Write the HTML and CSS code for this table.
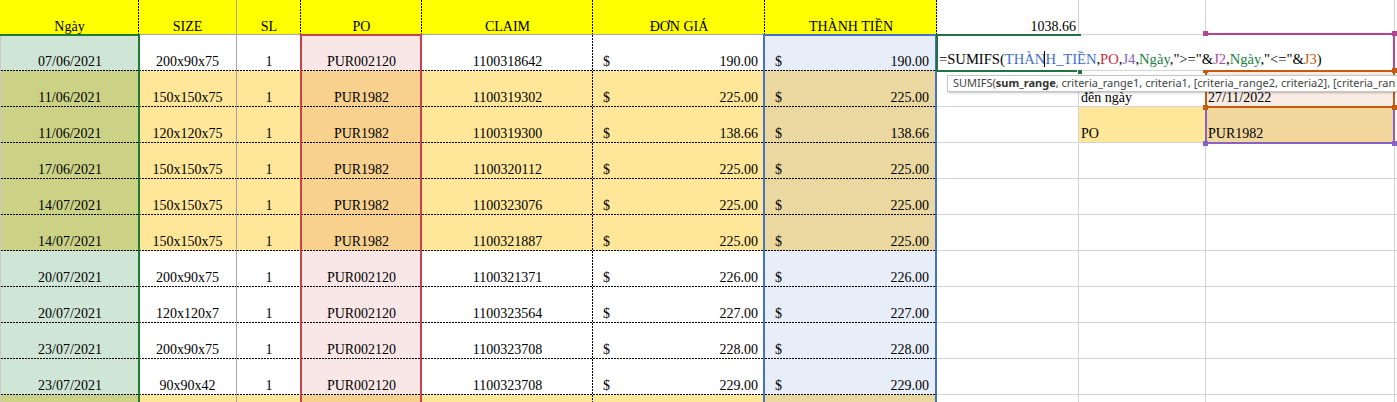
FILE: index.html
```html
<!DOCTYPE html>
<html lang="vi">
<head>
<meta charset="utf-8">
<title>Sheet</title>
<link rel="stylesheet" href="styles.css">
</head>
<body>
<div class="sheet">
  <div class="row hd">
    <div class="c a">Ngày</div>
    <div class="c b">SIZE</div>
    <div class="c cc">SL</div>
    <div class="c d">PO</div>
    <div class="c e">CLAIM</div>
    <div class="c f">ĐƠN GIÁ</div>
    <div class="c g">THÀNH TIỀN</div>
    <div class="c x num">1038.66</div>
    <div class="c x"></div>
    <div class="c x"></div>
    <div class="c x"></div>
  </div>

  <div class="row dr">
    <div class="c t a">07/06/2021</div><div class="c t b">200x90x75</div><div class="c t cc">1</div><div class="c t d">PUR002120</div><div class="c e">1100318642</div>
    <div class="c t f acc"><span>$</span><span>190.00</span></div><div class="c t g acc"><span>$</span><span>190.00</span></div>
    <div class="c x"></div><div class="c x"></div><div class="c x"></div><div class="c x"></div>
  </div>
  <div class="row dr p">
    <div class="c t a">11/06/2021</div><div class="c t b">150x150x75</div><div class="c t cc">1</div><div class="c t d">PUR1982</div><div class="c e">1100319302</div>
    <div class="c t f acc"><span>$</span><span>225.00</span></div><div class="c t g acc"><span>$</span><span>225.00</span></div>
    <div class="c x"></div><div class="c x">đên ngày</div><div class="c x j3">27/11/2022</div><div class="c x"></div>
  </div>
  <div class="row dr p">
    <div class="c t a">11/06/2021</div><div class="c t b">120x120x75</div><div class="c t cc">1</div><div class="c t d">PUR1982</div><div class="c e">1100319300</div>
    <div class="c t f acc"><span>$</span><span>138.66</span></div><div class="c t g acc"><span>$</span><span>138.66</span></div>
    <div class="c x"></div><div class="c x i4">PO</div><div class="c x j4">PUR1982</div><div class="c x"></div>
  </div>
  <div class="row dr p">
    <div class="c t a">17/06/2021</div><div class="c t b">150x150x75</div><div class="c t cc">1</div><div class="c t d">PUR1982</div><div class="c e">1100320112</div>
    <div class="c t f acc"><span>$</span><span>225.00</span></div><div class="c t g acc"><span>$</span><span>225.00</span></div>
    <div class="c x"></div><div class="c x"></div><div class="c x"></div><div class="c x"></div>
  </div>
  <div class="row dr p">
    <div class="c t a">14/07/2021</div><div class="c t b">150x150x75</div><div class="c t cc">1</div><div class="c t d">PUR1982</div><div class="c e">1100323076</div>
    <div class="c t f acc"><span>$</span><span>225.00</span></div><div class="c t g acc"><span>$</span><span>225.00</span></div>
    <div class="c x"></div><div class="c x"></div><div class="c x"></div><div class="c x"></div>
  </div>
  <div class="row dr p">
    <div class="c t a">14/07/2021</div><div class="c t b">150x150x75</div><div class="c t cc">1</div><div class="c t d">PUR1982</div><div class="c e">1100321887</div>
    <div class="c t f acc"><span>$</span><span>225.00</span></div><div class="c t g acc"><span>$</span><span>225.00</span></div>
    <div class="c x"></div><div class="c x"></div><div class="c x"></div><div class="c x"></div>
  </div>
  <div class="row dr">
    <div class="c t a">20/07/2021</div><div class="c t b">200x90x75</div><div class="c t cc">1</div><div class="c t d">PUR002120</div><div class="c e">1100321371</div>
    <div class="c t f acc"><span>$</span><span>226.00</span></div><div class="c t g acc"><span>$</span><span>226.00</span></div>
    <div class="c x"></div><div class="c x"></div><div class="c x"></div><div class="c x"></div>
  </div>
  <div class="row dr">
    <div class="c t a">20/07/2021</div><div class="c t b">120x120x7</div><div class="c t cc">1</div><div class="c t d">PUR002120</div><div class="c e">1100323564</div>
    <div class="c t f acc"><span>$</span><span>227.00</span></div><div class="c t g acc"><span>$</span><span>227.00</span></div>
    <div class="c x"></div><div class="c x"></div><div class="c x"></div><div class="c x"></div>
  </div>
  <div class="row dr">
    <div class="c t a">23/07/2021</div><div class="c t b">200x90x75</div><div class="c t cc">1</div><div class="c t d">PUR002120</div><div class="c e">1100323708</div>
    <div class="c t f acc"><span>$</span><span>228.00</span></div><div class="c t g acc"><span>$</span><span>228.00</span></div>
    <div class="c x"></div><div class="c x"></div><div class="c x"></div><div class="c x"></div>
  </div>
  <div class="row dr">
    <div class="c t a">23/07/2021</div><div class="c t b">90x90x42</div><div class="c t cc">1</div><div class="c t d">PUR002120</div><div class="c e">1100323708</div>
    <div class="c t f acc"><span>$</span><span>229.00</span></div><div class="c t g acc"><span>$</span><span>229.00</span></div>
    <div class="c x"></div><div class="c x"></div><div class="c x"></div><div class="c x"></div>
  </div>
  <div class="row dr p">
    <div class="c t a"></div><div class="c t b"></div><div class="c t cc"></div><div class="c t d"></div><div class="c e"></div>
    <div class="c t f acc"></div><div class="c t g acc"></div>
    <div class="c x"></div><div class="c x"></div><div class="c x"></div><div class="c x"></div>
  </div>

  <div class="rng rng-a"></div>
  <div class="rng rng-d"></div>
  <div class="rng rng-g"></div>

  <div class="rng rng-j2"><i class="hnd tl"></i><i class="hnd tr"></i></div>
  <div class="rng rng-j4"><i class="hnd bl"></i><i class="hnd br"></i></div>
  <div class="rng rng-j3"><i class="hnd tl"></i><i class="hnd tr"></i><i class="hnd bl"></i><i class="hnd br"></i></div>

  <div class="active"><i class="fill"></i></div>

  <div class="editor"><span class="ftx">=SUMIFS(<span class="fb">THÀN<span class="caret">H_TIỀN</span></span>,<span class="fr">PO</span>,<span class="fp">J4</span>,<span class="fg">Ngày</span>,"&gt;="&amp;<span class="fm">J2</span>,<span class="fg">Ngày</span>,"&lt;="&amp;<span class="fo">J3</span>)</span></div>

  <div class="tip">SUMIFS(<b>sum_range</b>, criteria_range1, criteria1, [criteria_range2, criteria2], [criteria_ran</div>
</div>
</body>
</html>
```

FILE: styles.css
```css
* { box-sizing: border-box; margin: 0; padding: 0; }

:root {
  --dh: repeating-linear-gradient(90deg, #000 0 2px, transparent 2px 3px);
  --dv: repeating-linear-gradient(180deg, #000 0 2px, transparent 2px 3px);
}

html, body {
  width: 1397px;
  height: 402px;
  overflow: hidden;
  background: #fff;
}

.sheet {
  position: relative;
  display: grid;
  grid-template-columns: 139px 98px 64px 121px 171px 172px 172px 142px 127px 189px 1fr;
  grid-template-rows: 35px;
  grid-auto-rows: 36px;
  font-family: "Liberation Serif", "Times New Roman", serif;
  font-size: 14px;
  color: #000;
}

.row { display: contents; }

.c {
  display: flex;
  align-items: flex-end;
  justify-content: center;
  white-space: nowrap;
  overflow: hidden;
  line-height: 16px;
  padding-bottom: 1px;
}

/* header row */
.hd .c {
  background-color: #ffff00;
  border-bottom: 1px solid #a6a6a6;
  line-height: 14px;
  padding-bottom: 0;
  background-image: var(--dv);
  background-repeat: no-repeat;
  background-size: 1px 100%;
  background-position: right top;
}
.hd .b {
  background-image: none;
  border-right: 1px solid #a6a6a6;
}
.hd .x {
  background: #fff;
  border-right: 1px solid #d4d4d4;
  border-bottom: 1px solid #d4d4d4;
}
.hd .num {
  justify-content: flex-end;
  padding-right: 2px;
}

/* data rows */
.dr .t {
  background-image: var(--dh);
  background-repeat: no-repeat;
  background-size: 100% 1px;
  background-position: left bottom;
}
.dr .e {
  background-image: var(--dh), var(--dv);
  background-repeat: no-repeat, no-repeat;
  background-size: 100% 1px, 1px 100%;
  background-position: left bottom, right top;
}
.dr .a { border-left: 1px solid #c8c8c8; background-color: #cfe5d6; }
.dr .b { border-right: 1px solid #a6a6a6; }
.dr .d { background-color: #f9e7e8; }
.dr .g { background-color: #e8eef9; }

.dr.p .a { background-color: #cbd286; }
.dr.p .b,
.dr.p .cc,
.dr.p .e,
.dr.p .f { background-color: #ffe699; }
.dr.p .d { background-color: #f8d18f; }
.dr.p .g { background-color: #ebd8a0; }

.acc {
  justify-content: space-between;
  padding-left: 10px;
  padding-right: 7px;
}
.g.acc { padding-right: 8px; }

.dr .x {
  background: #fff;
  border-right: 1px solid #d4d4d4;
  border-bottom: 1px solid #d4d4d4;
  padding-bottom: 0;
  justify-content: flex-start;
  padding-left: 2px;
}
.dr .x.j3 { background: #f9ece4; }
.dr .x.i4 { background: #ffe699; }
.dr .x.j4 { background: #f2d79c; }

/* range finder boxes (overlay) */
.rng {
  position: absolute;
  border: 2px solid;
  z-index: 1;
}
.rng-a { left: -2px; top: 34px; width: 142px; height: 420px; border-color: #1e7b32; }
.rng-d { left: 300px; top: 34px; width: 122px; height: 420px; border-color: #c8414b; }
.rng-g { left: 763px; top: 34px; width: 174px; height: 420px; border-color: #4472c4; }

.rng-j2 { left: 1205px; top: 33px; width: 190px; height: 39px; border-color: #b4458f; }
.rng-j3 { left: 1205px; top: 70px; width: 190px; height: 38px; border-color: #c55a11; }
.rng-j4 { left: 1205px; top: 106px; width: 190px; height: 38px; border-color: #8761c4; }

.hnd {
  position: absolute;
  width: 5px;
  height: 5px;
}
.rng-j2 .hnd { background: #b4458f; }
.rng-j3 .hnd { background: #c55a11; }
.rng-j4 .hnd { background: #8761c4; }
.hnd.tl { left: -4px; top: -4px; }
.hnd.tr { right: -4px; top: -4px; }
.hnd.bl { left: -4px; bottom: -4px; }
.hnd.br { right: -4px; bottom: -4px; }

.active {
  position: absolute;
  left: 936px;
  top: 34px;
  width: 145px;
  height: 38px;
  border: 2px solid #217346;
  border-right: 0;
  z-index: 1;
}
.fill {
  position: absolute;
  right: -2px;
  bottom: -5px;
  width: 6px;
  height: 6px;
  background: #217346;
  border: 1px solid #fff;
}

/* in-cell editor */
.editor {
  position: absolute;
  left: 938px;
  top: 36px;
  width: 454px;
  height: 34px;
  background: #fff;
  z-index: 2;
  display: flex;
  align-items: flex-end;
  padding: 0 0 3px 1px;
  font-size: 14.6px;
  line-height: 16px;
  white-space: nowrap;
}
.caret { border-left: 1px solid #000; margin-left: -1px; }
.fb { color: #3f6fc4; }
.fr { color: #c8303c; }
.fp { color: #8a5ec2; }
.fg { color: #1e8040; }
.fm { color: #b8489a; }
.fo { color: #c55a11; }

/* function tooltip */
.tip {
  position: absolute;
  left: 947px;
  top: 75px;
  width: 470px;
  height: 17px;
  background: #fff;
  border: 1px solid #c6c6c6;
  box-shadow: 1px 1px 2px rgba(0, 0, 0, 0.25);
  font-family: "Noto Sans", sans-serif;
  font-size: 11px;
  line-height: 13px;
  color: #444;
  padding-left: 5px;
  white-space: nowrap;
  overflow: hidden;
  z-index: 3;
}
.tip b { color: #333; }
```
